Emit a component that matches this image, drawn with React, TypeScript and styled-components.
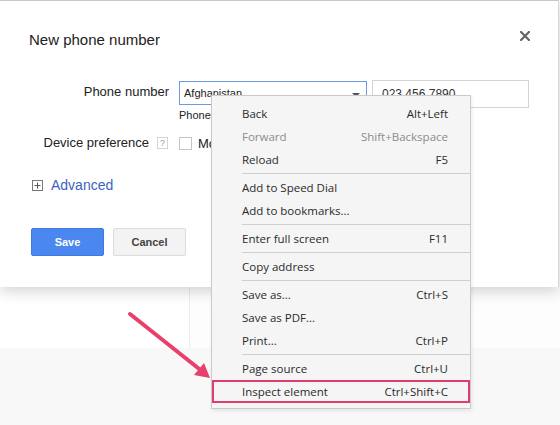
import React from "react";
import styled, { createGlobalStyle } from "styled-components";

const GlobalStyle = createGlobalStyle`
  html, body {
    margin: 0;
    padding: 0;
    background: #fafafa;
  }
  * {
    box-sizing: border-box;
  }
`;

interface MenuEntry {
  label?: string;
  shortcut?: string;
  disabled?: boolean;
  highlighted?: boolean;
  separator?: boolean;
}

const menuEntries: MenuEntry[] = [
  { label: "Back", shortcut: "Alt+Left" },
  { label: "Forward", shortcut: "Shift+Backspace", disabled: true },
  { label: "Reload", shortcut: "F5" },
  { separator: true },
  { label: "Add to Speed Dial" },
  { label: "Add to bookmarks..." },
  { separator: true },
  { label: "Enter full screen", shortcut: "F11" },
  { separator: true },
  { label: "Copy address" },
  { separator: true },
  { label: "Save as...", shortcut: "Ctrl+S" },
  { label: "Save as PDF..." },
  { label: "Print...", shortcut: "Ctrl+P" },
  { separator: true },
  { label: "Page source", shortcut: "Ctrl+U" },
  { label: "Inspect element", shortcut: "Ctrl+Shift+C", highlighted: true },
];

const App: React.FC = () => {
  return (
    <Screen>
      <GlobalStyle />
      <Backdrop>
        <BackdropTop>
          <BackdropSide />
          <BackdropMain />
        </BackdropTop>
        <BackdropBottom />
      </Backdrop>

      <Dialog>
        <DialogHeader>
          <DialogTitle>New phone number</DialogTitle>
          <CloseButton aria-label="Close">
            <svg width="10" height="10" viewBox="0 0 10 10">
              <path
                d="M1 1 L9 9 M9 1 L1 9"
                stroke="#666"
                strokeWidth="2.2"
                strokeLinecap="square"
              />
            </svg>
          </CloseButton>
        </DialogHeader>

        <FormRow>
          <FieldLabel>Phone number</FieldLabel>
          <Controls>
            <InputLine>
              <CountrySelect>
                <span>Afghanistan</span>
                <SelectCaret />
              </CountrySelect>
              <PhoneInput>023 456 7890</PhoneInput>
            </InputLine>
            <Helper>Phone</Helper>
          </Controls>
        </FormRow>

        <FormRow $spaced>
          <FieldLabel>
            Device preference
            <HelpBox>?</HelpBox>
          </FieldLabel>
          <CheckLine>
            <CheckBox />
            <span>Mobile</span>
          </CheckLine>
        </FormRow>

        <AdvancedLink>
          <PlusBox>
            <svg width="9" height="9" viewBox="0 0 9 9">
              <path d="M4.5 1.5 V7.5 M1.5 4.5 H7.5" stroke="#555" strokeWidth="1" />
            </svg>
          </PlusBox>
          Advanced
        </AdvancedLink>

        <ButtonRow>
          <ActionButton $primary>Save</ActionButton>
          <ActionButton>Cancel</ActionButton>
        </ButtonRow>
      </Dialog>

      <ContextMenu>
        {menuEntries.map((entry, i) =>
          entry.separator ? (
            <MenuSeparator key={i} />
          ) : (
            <MenuItem
              key={i}
              $disabled={entry.disabled}
              $highlighted={entry.highlighted}
            >
              <span>{entry.label}</span>
              {entry.shortcut && <span>{entry.shortcut}</span>}
            </MenuItem>
          )
        )}
      </ContextMenu>

      <Pointer width="560" height="425" viewBox="0 0 560 425">
        <line
          x1="130"
          y1="314"
          x2="203"
          y2="372"
          stroke="#e8406c"
          strokeWidth="4"
          strokeLinecap="round"
        />
        <polygon points="210,378 194,375 204,363" fill="#e8406c" />
      </Pointer>
    </Screen>
  );
};

const Screen = styled.div`
  position: relative;
  width: 560px;
  height: 425px;
  overflow: hidden;
  font-family: "Liberation Sans", Arial, sans-serif;
  color: #222;
`;

const Backdrop = styled.div`
  display: flex;
  flex-direction: column;
  height: 100%;
`;

const BackdropTop = styled.div`
  display: flex;
  height: 348px;
  background: #fff;
`;

const BackdropSide = styled.div`
  width: 190px;
  border-right: 1px solid #ececec;
`;

const BackdropMain = styled.div`
  flex: 1;
  background: #fdfdfd;
`;

const BackdropBottom = styled.div`
  flex: 1;
  background: #f8f8f8;
`;

const Dialog = styled.div`
  position: absolute;
  top: 0;
  left: 0;
  width: 559px;
  height: 287px;
  background: #fff;
  border-top: 1px solid #c8c8c8;
  border-right: 1px solid #d6d6d6;
  box-shadow: 0 4px 14px rgba(0, 0, 0, 0.18);
  padding: 29px 30px 0 29px;
  display: flex;
  flex-direction: column;
`;

const DialogHeader = styled.div`
  display: flex;
  justify-content: space-between;
  align-items: flex-start;
  height: 20px;
  margin-bottom: 30px;
`;

const DialogTitle = styled.div`
  font-size: 15px;
  line-height: 20px;
  color: #222;
`;

const CloseButton = styled.div`
  width: 10px;
  height: 10px;
  margin-top: 1px;
  margin-right: -2px;
  display: flex;
`;

const FormRow = styled.div<{ $spaced?: boolean }>`
  display: grid;
  grid-template-columns: 140px 1fr;
  column-gap: 10px;
  margin-top: ${(p) => (p.$spaced ? "10px" : "0")};
`;

const FieldLabel = styled.div`
  display: flex;
  justify-content: flex-end;
  align-items: center;
  gap: 8px;
  font-size: 13px;
  line-height: 24px;
  height: 24px;
  color: #222;
`;

const HelpBox = styled.span`
  width: 11px;
  height: 12px;
  border: 1px solid #d4d4d4;
  color: #999;
  font-size: 9px;
  line-height: 10px;
  text-align: center;
  margin-right: 1px;
`;

const Controls = styled.div`
  display: flex;
  flex-direction: column;
`;

const InputLine = styled.div`
  display: flex;
  align-items: flex-start;
  gap: 5px;
`;

const CountrySelect = styled.div`
  width: 188px;
  height: 24px;
  margin-top: 1px;
  border: 1px solid #6b9ae0;
  display: flex;
  align-items: center;
  justify-content: space-between;
  padding: 0 6px 0 4px;
  font-size: 11px;
  color: #222;
`;

const SelectCaret = styled.span`
  width: 0;
  height: 0;
  border-left: 4px solid transparent;
  border-right: 4px solid transparent;
  border-top: 4px solid #555;
  margin-top: 3px;
`;

const PhoneInput = styled.div`
  width: 157px;
  height: 28px;
  border: 1px solid #d4d4d4;
  padding: 0 9px;
  font-size: 12px;
  line-height: 26px;
  color: #333;
`;

const Helper = styled.div`
  margin-top: 1px;
  font-size: 11px;
  line-height: 12px;
  color: #222;
`;

const CheckLine = styled.div`
  display: flex;
  align-items: center;
  gap: 6px;
  height: 24px;
  font-size: 13px;
`;

const CheckBox = styled.span`
  width: 13px;
  height: 13px;
  border: 1px solid #c6c6c6;
  background: #fff;
`;

const AdvancedLink = styled.div`
  display: flex;
  align-items: center;
  gap: 8px;
  margin: 20px 0 0 3px;
  height: 20px;
  font-size: 14px;
  color: #3d62bf;
`;

const PlusBox = styled.span`
  width: 11px;
  height: 11px;
  border: 1px solid #777;
  display: flex;
  align-items: center;
  justify-content: center;
`;

const ButtonRow = styled.div`
  display: flex;
  gap: 9px;
  margin: 33px 0 0 2px;
`;

const ActionButton = styled.div<{ $primary?: boolean }>`
  width: 73px;
  height: 28px;
  border-radius: 2px;
  display: flex;
  align-items: center;
  justify-content: center;
  font-size: 11px;
  font-weight: bold;
  background: ${(p) => (p.$primary ? "#4a87ee" : "#f3f3f3")};
  border: 1px solid ${(p) => (p.$primary ? "#3d7ae4" : "#dcdcdc")};
  color: ${(p) => (p.$primary ? "#fff" : "#444")};
`;

const ContextMenu = styled.div`
  position: absolute;
  left: 211px;
  top: 95px;
  width: 260px;
  padding: 6px 0 5px;
  background: #f5f5f5;
  border: 1px solid #cbcbcb;
  box-shadow: 1px 2px 4px rgba(0, 0, 0, 0.08);
  font-family: "Open Sans", "Noto Sans", sans-serif;
  font-size: 11.5px;
`;

const MenuItem = styled.div<{ $disabled?: boolean; $highlighted?: boolean }>`
  display: flex;
  justify-content: space-between;
  align-items: center;
  height: 23px;
  padding: 0 22px 0 30px;
  color: ${(p) => (p.$disabled ? "#8c8c8c" : "#2a2a2a")};
  box-shadow: ${(p) => (p.$highlighted ? "inset 0 0 0 2px #e03d6c" : "none")};
`;

const MenuSeparator = styled.div`
  height: 1px;
  margin: 2px 0 2px 30px;
  background: #cfcfcf;
`;

const Pointer = styled.svg`
  position: absolute;
  left: 0;
  top: 0;
  pointer-events: none;
`;

export default App;
